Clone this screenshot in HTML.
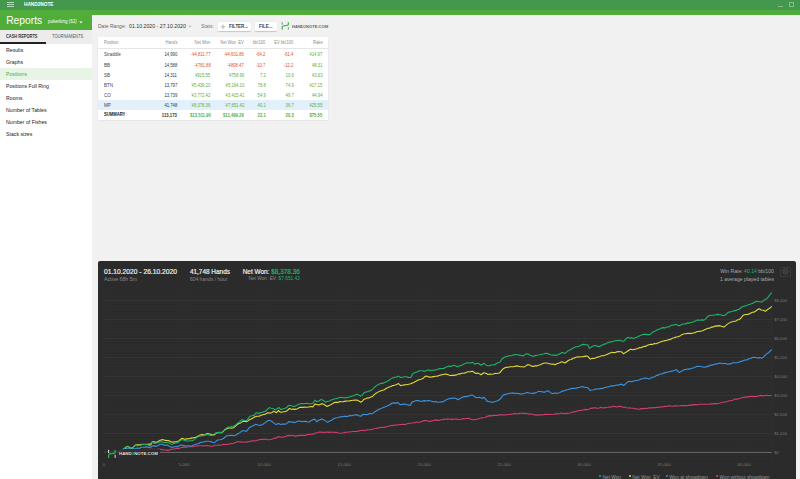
<!DOCTYPE html>
<html><head><meta charset="utf-8">
<style>
*{margin:0;padding:0;box-sizing:border-box}
html,body{width:800px;height:479px;overflow:hidden;background:#f1f1f1;font-family:"Liberation Sans",sans-serif}
.a{position:absolute;white-space:nowrap}
#topbar{left:0;top:0;width:800px;height:9.5px;background:#43984d}
#green{left:0;top:9.5px;width:800px;height:5.7px;background:#51ad39}
#sidegreen{left:0;top:9.5px;width:92px;height:20.5px;background:#51ad39}
#tabs{left:0;top:30px;width:92px;height:13.5px;background:#ececec}
#side{left:0;top:43.5px;width:92px;height:436px;background:#fff}
.mi{position:absolute;left:6px;font-size:5.2px;color:#222;line-height:12px;height:12px}
#card{left:92px;top:15.5px;width:800px;height:470px;background:#f1f1f1;border-radius:2px}
#tbl{left:98px;top:36.8px;width:229.8px;height:83px;background:#fff;box-shadow:0 .5px 1.5px rgba(0,0,0,.12)}
.th{position:absolute;font-size:5px;color:#8c8c8c;line-height:11.7px;transform:scaleX(.82);transform-origin:100% 0}
.td{position:absolute;font-size:5px;color:#333;line-height:10.2px;transform:scaleX(.84);transform-origin:100% 0}
.tl{transform-origin:0 0;transform:scaleX(.87);font-size:5.2px;color:#444}
.r{color:#e0502a}.g{color:#4caf50}
#chart{left:98px;top:261px;width:698.3px;height:230px;background:#2b2b2b;border-radius:2px}
</style></head><body>
<div class="a" id="topbar"></div><div class="a" id="green"></div><div class="a" id="sidegreen"></div><div class="a" id="tabs"></div><div class="a" id="side"></div><div class="a" id="card"></div>
<div class="a" style="left:7px;top:2px;width:6.8px;height:1.1px;background:rgba(255,255,255,.62)"></div>
<div class="a" style="left:7px;top:3.8px;width:6.8px;height:1.1px;background:rgba(255,255,255,.62)"></div>
<div class="a" style="left:7px;top:5.6px;width:6.8px;height:1.1px;background:rgba(255,255,255,.62)"></div>
<div class="a" style="left:24px;top:0px;font-size:5.4px;line-height:8px;font-weight:bold;color:#fff;transform:scaleX(.88);transform-origin:0 0">HAND2NOTE</div>
<div class="a" style="left:778.3px;top:5.8px;width:4.5px;height:.8px;background:rgba(255,255,255,.35)"></div>
<div class="a" style="left:789px;top:2px;width:5px;height:4.8px;border:.8px solid rgba(255,255,255,.35)"></div>
<div class="a" style="left:6.2px;top:13.8px;font-size:10.3px;line-height:14px;color:#fff">Reports</div>
<div class="a" style="left:48px;top:19.1px;font-size:4.5px;line-height:6px;color:#fff">pokerking (62)</div>
<svg class="a" style="left:79px;top:20.5px" width="4" height="3" viewBox="0 0 4 3"><path d="M.3 .4H3.7L2 2.2Z" fill="#fff"/></svg>
<div class="a" style="left:6px;top:33.8px;font-size:4.7px;line-height:6px;font-weight:bold;color:#333;transform:scaleX(.845);transform-origin:0 0">CASH REPORTS</div>
<div class="a" style="left:52.2px;top:33.8px;font-size:4.7px;line-height:6px;color:#555;transform:scaleX(.863);transform-origin:0 0">TOURNAMENTS</div>
<div class="a" style="left:0;top:42.2px;width:46px;height:1.5px;background:#222"></div>
<div class="a" style="left:0;top:68px;width:92px;height:12px;background:#e8f4e6"></div>
<div class="mi" style="top:44px">Results</div>
<div class="mi" style="top:56px">Graphs</div>
<div class="mi" style="top:68px;color:#4caf50">Positions</div>
<div class="mi" style="top:80px">Positions Full Ring</div>
<div class="mi" style="top:92px">Rooms</div>
<div class="mi" style="top:104px">Number of Tables</div>
<div class="mi" style="top:116px">Number of Fishes</div>
<div class="mi" style="top:128px">Stack sizes</div>
<div class="a" style="left:98px;top:23px;font-size:5px;line-height:6px;color:#666">Date Range:</div>
<div class="a" style="left:129px;top:23.2px;font-size:5.23px;line-height:6px;color:#333">01.10.2020 - 27.10.2020</div>
<svg class="a" style="left:188px;top:24.5px" width="4" height="3" viewBox="0 0 4 3"><path d="M.4 .7H3.6L2 2.3Z" fill="#aaa"/></svg>
<div class="a" style="left:201px;top:23px;font-size:5px;line-height:6px;color:#777">Stats:</div>
<div class="a" style="left:217.5px;top:21.9px;width:33.6px;height:9.1px;background:#fff;border-radius:1px;box-shadow:0 .5px 1px rgba(0,0,0,.18)"></div>
<svg class="a" style="left:220px;top:23.5px" width="6" height="6" viewBox="0 0 6 6"><path d="M3 .5V5.2M.6 2.85H5.4" stroke="#888" stroke-width=".55"/></svg>
<div class="a" style="left:228.8px;top:23.4px;font-size:5.4px;line-height:6px;color:#444;font-weight:bold;transform:scaleX(.83);transform-origin:0 0">FILTER...</div>
<div class="a" style="left:254.8px;top:21.9px;width:21.9px;height:9.1px;background:#fff;border-radius:1px;box-shadow:0 .5px 1px rgba(0,0,0,.18)"></div>
<div class="a" style="left:258.7px;top:23.4px;font-size:5.4px;line-height:6px;color:#444;font-weight:bold;transform:scaleX(.83);transform-origin:0 0">FILE...</div>
<svg class="a" style="left:276px;top:18px" width="24" height="16" viewBox="276 18 24 16"><path d="M282.2 22.2V24.7 M288.4 27.3V29.6" stroke="#7a9a7c" stroke-width="1.1" fill="none"/><path d="M282.2 29.5V27.3Q282.2 26.1 283.6 25.9L287 25.4Q288.4 25.2 288.4 24V22.2" stroke="#4cba50" stroke-width="1.35" fill="none"/></svg>
<div class="a" style="left:292px;top:23.6px;font-size:4.1px;line-height:6px;color:#666;font-weight:bold">HAND<span style="color:#4caf50">2</span>NOTE.COM</div>
<div class="a" id="tbl"></div>
<div class="th" style="left:104.3px;top:36.8px;transform-origin:0 0">Position</div>
<div class="th" style="right:622.8px;top:36.8px">Hands</div>
<div class="th" style="right:589.6px;top:36.8px">Net Won</div>
<div class="th" style="right:556.2px;top:36.8px">Net Won&nbsp;&nbsp;EV</div>
<div class="th" style="right:534.3px;top:36.8px">bb/100</div>
<div class="th" style="right:506.3px;top:36.8px">EV bb/100</div>
<div class="th" style="right:477.8px;top:36.8px">Rake</div>
<div class="a" style="left:98px;top:48.2px;width:229.8px;height:.5px;background:#e6e6e6"></div>
<div class="a" style="left:98px;top:99.6px;width:229.8px;height:10.1px;background:#e2f0fc"></div>
<div class="td tl" style="left:104.3px;top:49.3px">Straddle</div>
<div class="td" style="right:622.8px;top:49.3px">14,990</div>
<div class="td r" style="right:589.6px;top:49.3px">-¥4,811.77</div>
<div class="td r" style="right:556.2px;top:49.3px">-¥4,601.86</div>
<div class="td r" style="right:534.3px;top:49.3px">-64.2</div>
<div class="td r" style="right:506.3px;top:49.3px">-61.4</div>
<div class="td g" style="right:477.8px;top:49.3px">¥14.97</div>
<div class="td tl" style="left:104.3px;top:59.5px">BB</div>
<div class="td" style="right:622.8px;top:59.5px">14,588</div>
<div class="td r" style="right:589.6px;top:59.5px">-¥781.88</div>
<div class="td r" style="right:556.2px;top:59.5px">-¥808.47</div>
<div class="td r" style="right:534.3px;top:59.5px">-10.7</div>
<div class="td r" style="right:506.3px;top:59.5px">-12.2</div>
<div class="td g" style="right:477.8px;top:59.5px">¥8.31</div>
<div class="td tl" style="left:104.3px;top:69.7px">SB</div>
<div class="td" style="right:622.8px;top:69.7px">14,311</div>
<div class="td g" style="right:589.6px;top:69.7px">¥915.55</div>
<div class="td g" style="right:556.2px;top:69.7px">¥758.69</div>
<div class="td g" style="right:534.3px;top:69.7px">7.2</div>
<div class="td g" style="right:506.3px;top:69.7px">10.6</div>
<div class="td g" style="right:477.8px;top:69.7px">¥3.63</div>
<div class="td tl" style="left:104.3px;top:79.9px">BTN</div>
<div class="td" style="right:622.8px;top:79.9px">13,797</div>
<div class="td g" style="right:589.6px;top:79.9px">¥5,439.20</div>
<div class="td g" style="right:556.2px;top:79.9px">¥5,164.10</div>
<div class="td g" style="right:534.3px;top:79.9px">78.8</div>
<div class="td g" style="right:506.3px;top:79.9px">74.9</div>
<div class="td g" style="right:477.8px;top:79.9px">¥17.15</div>
<div class="td tl" style="left:104.3px;top:90.1px">CO</div>
<div class="td" style="right:622.8px;top:90.1px">13,739</div>
<div class="td g" style="right:589.6px;top:90.1px">¥3,772.42</div>
<div class="td g" style="right:556.2px;top:90.1px">¥3,415.41</div>
<div class="td g" style="right:534.3px;top:90.1px">54.9</div>
<div class="td g" style="right:506.3px;top:90.1px">49.7</div>
<div class="td g" style="right:477.8px;top:90.1px">¥4.94</div>
<div class="td tl" style="left:104.3px;top:100.3px">MP</div>
<div class="td" style="right:622.8px;top:100.3px">41,748</div>
<div class="td g" style="right:589.6px;top:100.3px">¥8,378.36</div>
<div class="td g" style="right:556.2px;top:100.3px">¥7,651.42</div>
<div class="td g" style="right:534.3px;top:100.3px">40.1</div>
<div class="td g" style="right:506.3px;top:100.3px">36.7</div>
<div class="td g" style="right:477.8px;top:100.3px">¥25.55</div>
<div class="td tl" style="left:104.3px;top:109.5px;font-weight:bold;font-size:4.8px;color:#222;top:109.8px">SUMMARY</div>
<div class="td" style="right:622.8px;top:109.5px;font-weight:bold">113,173</div>
<div class="td g" style="right:589.6px;top:109.5px;font-weight:bold">$13,511.96</div>
<div class="td g" style="right:556.2px;top:109.5px;font-weight:bold">$11,499.29</div>
<div class="td g" style="right:534.3px;top:109.5px;font-weight:bold">22.1</div>
<div class="td g" style="right:506.3px;top:109.5px;font-weight:bold">20.3</div>
<div class="td g" style="right:477.8px;top:109.5px;font-weight:bold">$75.55</div>
<div class="a" id="chart"></div>
<div class="a" style="left:104px;top:267.8px;font-size:6.7px;line-height:8px;-webkit-text-stroke:.22px #e6e6e6;color:#e6e6e6">01.10.2020 - 26.10.2020</div>
<div class="a" style="left:104px;top:276.2px;font-size:5.2px;line-height:6px;color:#8a8a8a">Active 68h 5m</div>
<div class="a" style="left:189.9px;top:267.8px;font-size:6.45px;line-height:8px;-webkit-text-stroke:.22px #e6e6e6;color:#e6e6e6">41,748 Hands</div>
<div class="a" style="left:189.9px;top:276.2px;font-size:5px;line-height:6px;color:#8a8a8a">604 hands / hour</div>
<div class="a" style="left:242.7px;top:267.8px;font-size:6.45px;line-height:8px;-webkit-text-stroke:.22px;color:#e6e6e6">Net Won: <span style="color:#1db367">$8,378.36</span></div>
<div class="a" style="right:500.1px;top:276.2px;font-size:4.8px;line-height:6px;color:#8a8a8a">Net Won&nbsp;&nbsp;EV: <span style="color:#1db367">$7,651.42</span></div>
<div class="a" style="right:26.2px;top:268.4px;font-size:5.1px;line-height:6px;color:#aaa">Win Rate: <span style="color:#1db367">40.14</span> bb/100</div>
<div class="a" style="right:26px;top:276px;font-size:5.1px;line-height:6px;color:#aaa">1 average played tables</div>
<div class="a" style="left:780.2px;top:267.2px;width:10.5px;height:9.6px;border:.5px solid #3a3a3a;border-radius:1px"></div>
<svg class="a" style="left:781.9px;top:268.4px" width="7" height="7" viewBox="0 0 7 7"><path d="M5.57 2.75 L6.33 2.87 L6.33 4.13 L5.57 4.25 L5.49 4.44 L5.95 5.05 L5.05 5.95 L4.44 5.49 L4.25 5.57 L4.13 6.33 L2.87 6.33 L2.75 5.57 L2.56 5.49 L1.95 5.95 L1.05 5.05 L1.51 4.44 L1.43 4.25 L0.67 4.13 L0.67 2.87 L1.43 2.75 L1.51 2.56 L1.05 1.95 L1.95 1.05 L2.56 1.51 L2.75 1.43 L2.87 0.67 L4.13 0.67 L4.25 1.43 L4.44 1.51 L5.05 1.05 L5.95 1.95 L5.49 2.56Z" stroke="#6a6a6a" stroke-width=".45" fill="none"/><circle cx="3.5" cy="3.5" r="1" stroke="#6a6a6a" stroke-width=".45" fill="none"/></svg>
<svg class="a" style="left:0;top:0" width="800" height="479" viewBox="0 0 800 479">
<line x1="104.0" y1="458.73" x2="772.0" y2="458.73" stroke="#323232" stroke-width="0.5"/>
<line x1="104.0" y1="455.57" x2="772.0" y2="455.57" stroke="#323232" stroke-width="0.5"/>
<line x1="104.0" y1="452.40" x2="772.0" y2="452.40" stroke="#8a8a8a" stroke-width="0.7"/>
<line x1="104.0" y1="449.23" x2="772.0" y2="449.23" stroke="#323232" stroke-width="0.5"/>
<line x1="104.0" y1="446.07" x2="772.0" y2="446.07" stroke="#323232" stroke-width="0.5"/>
<line x1="104.0" y1="442.90" x2="772.0" y2="442.90" stroke="#323232" stroke-width="0.5"/>
<line x1="104.0" y1="439.73" x2="772.0" y2="439.73" stroke="#323232" stroke-width="0.5"/>
<line x1="104.0" y1="436.57" x2="772.0" y2="436.57" stroke="#323232" stroke-width="0.5"/>
<line x1="104.0" y1="433.40" x2="772.0" y2="433.40" stroke="#3c3c3c" stroke-width="0.6"/>
<line x1="104.0" y1="430.23" x2="772.0" y2="430.23" stroke="#323232" stroke-width="0.5"/>
<line x1="104.0" y1="427.07" x2="772.0" y2="427.07" stroke="#323232" stroke-width="0.5"/>
<line x1="104.0" y1="423.90" x2="772.0" y2="423.90" stroke="#323232" stroke-width="0.5"/>
<line x1="104.0" y1="420.73" x2="772.0" y2="420.73" stroke="#323232" stroke-width="0.5"/>
<line x1="104.0" y1="417.57" x2="772.0" y2="417.57" stroke="#323232" stroke-width="0.5"/>
<line x1="104.0" y1="414.40" x2="772.0" y2="414.40" stroke="#3c3c3c" stroke-width="0.6"/>
<line x1="104.0" y1="411.23" x2="772.0" y2="411.23" stroke="#323232" stroke-width="0.5"/>
<line x1="104.0" y1="408.07" x2="772.0" y2="408.07" stroke="#323232" stroke-width="0.5"/>
<line x1="104.0" y1="404.90" x2="772.0" y2="404.90" stroke="#323232" stroke-width="0.5"/>
<line x1="104.0" y1="401.73" x2="772.0" y2="401.73" stroke="#323232" stroke-width="0.5"/>
<line x1="104.0" y1="398.57" x2="772.0" y2="398.57" stroke="#323232" stroke-width="0.5"/>
<line x1="104.0" y1="395.40" x2="772.0" y2="395.40" stroke="#3c3c3c" stroke-width="0.6"/>
<line x1="104.0" y1="392.23" x2="772.0" y2="392.23" stroke="#323232" stroke-width="0.5"/>
<line x1="104.0" y1="389.07" x2="772.0" y2="389.07" stroke="#323232" stroke-width="0.5"/>
<line x1="104.0" y1="385.90" x2="772.0" y2="385.90" stroke="#323232" stroke-width="0.5"/>
<line x1="104.0" y1="382.73" x2="772.0" y2="382.73" stroke="#323232" stroke-width="0.5"/>
<line x1="104.0" y1="379.57" x2="772.0" y2="379.57" stroke="#323232" stroke-width="0.5"/>
<line x1="104.0" y1="376.40" x2="772.0" y2="376.40" stroke="#3c3c3c" stroke-width="0.6"/>
<line x1="104.0" y1="373.23" x2="772.0" y2="373.23" stroke="#323232" stroke-width="0.5"/>
<line x1="104.0" y1="370.07" x2="772.0" y2="370.07" stroke="#323232" stroke-width="0.5"/>
<line x1="104.0" y1="366.90" x2="772.0" y2="366.90" stroke="#323232" stroke-width="0.5"/>
<line x1="104.0" y1="363.73" x2="772.0" y2="363.73" stroke="#323232" stroke-width="0.5"/>
<line x1="104.0" y1="360.57" x2="772.0" y2="360.57" stroke="#323232" stroke-width="0.5"/>
<line x1="104.0" y1="357.40" x2="772.0" y2="357.40" stroke="#3c3c3c" stroke-width="0.6"/>
<line x1="104.0" y1="354.23" x2="772.0" y2="354.23" stroke="#323232" stroke-width="0.5"/>
<line x1="104.0" y1="351.07" x2="772.0" y2="351.07" stroke="#323232" stroke-width="0.5"/>
<line x1="104.0" y1="347.90" x2="772.0" y2="347.90" stroke="#323232" stroke-width="0.5"/>
<line x1="104.0" y1="344.73" x2="772.0" y2="344.73" stroke="#323232" stroke-width="0.5"/>
<line x1="104.0" y1="341.57" x2="772.0" y2="341.57" stroke="#323232" stroke-width="0.5"/>
<line x1="104.0" y1="338.40" x2="772.0" y2="338.40" stroke="#3c3c3c" stroke-width="0.6"/>
<line x1="104.0" y1="335.23" x2="772.0" y2="335.23" stroke="#323232" stroke-width="0.5"/>
<line x1="104.0" y1="332.07" x2="772.0" y2="332.07" stroke="#323232" stroke-width="0.5"/>
<line x1="104.0" y1="328.90" x2="772.0" y2="328.90" stroke="#323232" stroke-width="0.5"/>
<line x1="104.0" y1="325.73" x2="772.0" y2="325.73" stroke="#323232" stroke-width="0.5"/>
<line x1="104.0" y1="322.57" x2="772.0" y2="322.57" stroke="#323232" stroke-width="0.5"/>
<line x1="104.0" y1="319.40" x2="772.0" y2="319.40" stroke="#3c3c3c" stroke-width="0.6"/>
<line x1="104.0" y1="316.23" x2="772.0" y2="316.23" stroke="#323232" stroke-width="0.5"/>
<line x1="104.0" y1="313.07" x2="772.0" y2="313.07" stroke="#323232" stroke-width="0.5"/>
<line x1="104.0" y1="309.90" x2="772.0" y2="309.90" stroke="#323232" stroke-width="0.5"/>
<line x1="104.0" y1="306.73" x2="772.0" y2="306.73" stroke="#323232" stroke-width="0.5"/>
<line x1="104.0" y1="303.57" x2="772.0" y2="303.57" stroke="#323232" stroke-width="0.5"/>
<line x1="104.0" y1="300.40" x2="772.0" y2="300.40" stroke="#3c3c3c" stroke-width="0.6"/>
<line x1="104.0" y1="297.23" x2="772.0" y2="297.23" stroke="#323232" stroke-width="0.5"/>
<line x1="104.0" y1="294.07" x2="772.0" y2="294.07" stroke="#323232" stroke-width="0.5"/>
<line x1="104.0" y1="290.90" x2="772.0" y2="290.90" stroke="#323232" stroke-width="0.5"/>
<line x1="104.00" y1="289" x2="104.00" y2="460" stroke="#343434" stroke-width=".5"/>
<line x1="184.00" y1="289" x2="184.00" y2="460" stroke="#343434" stroke-width=".5"/>
<line x1="264.00" y1="289" x2="264.00" y2="460" stroke="#343434" stroke-width=".5"/>
<line x1="344.00" y1="289" x2="344.00" y2="460" stroke="#343434" stroke-width=".5"/>
<line x1="424.00" y1="289" x2="424.00" y2="460" stroke="#343434" stroke-width=".5"/>
<line x1="504.00" y1="289" x2="504.00" y2="460" stroke="#343434" stroke-width=".5"/>
<line x1="584.00" y1="289" x2="584.00" y2="460" stroke="#343434" stroke-width=".5"/>
<line x1="664.00" y1="289" x2="664.00" y2="460" stroke="#343434" stroke-width=".5"/>
<line x1="744.00" y1="289" x2="744.00" y2="460" stroke="#343434" stroke-width=".5"/>
<line x1="772.00" y1="289" x2="772.00" y2="460" stroke="#343434" stroke-width=".5"/>
<text x="774.2" y="453.90" font-size="4.25" fill="#777" font-family="Liberation Sans">$0</text>
<text x="774.2" y="434.90" font-size="4.25" fill="#777" font-family="Liberation Sans">$1,000</text>
<text x="774.2" y="415.90" font-size="4.25" fill="#777" font-family="Liberation Sans">$2,000</text>
<text x="774.2" y="396.90" font-size="4.25" fill="#777" font-family="Liberation Sans">$3,000</text>
<text x="774.2" y="377.90" font-size="4.25" fill="#777" font-family="Liberation Sans">$4,000</text>
<text x="774.2" y="358.90" font-size="4.25" fill="#777" font-family="Liberation Sans">$5,000</text>
<text x="774.2" y="339.90" font-size="4.25" fill="#777" font-family="Liberation Sans">$6,000</text>
<text x="774.2" y="320.90" font-size="4.25" fill="#777" font-family="Liberation Sans">$7,000</text>
<text x="774.2" y="301.90" font-size="4.25" fill="#777" font-family="Liberation Sans">$8,000</text>
<text x="104.00" y="466" font-size="4.35" fill="#777" text-anchor="middle" font-family="Liberation Sans">0</text>
<text x="184.00" y="466" font-size="4.35" fill="#777" text-anchor="middle" font-family="Liberation Sans">5,000</text>
<text x="264.00" y="466" font-size="4.35" fill="#777" text-anchor="middle" font-family="Liberation Sans">10,000</text>
<text x="344.00" y="466" font-size="4.35" fill="#777" text-anchor="middle" font-family="Liberation Sans">15,000</text>
<text x="424.00" y="466" font-size="4.35" fill="#777" text-anchor="middle" font-family="Liberation Sans">20,000</text>
<text x="504.00" y="466" font-size="4.35" fill="#777" text-anchor="middle" font-family="Liberation Sans">25,000</text>
<text x="584.00" y="466" font-size="4.35" fill="#777" text-anchor="middle" font-family="Liberation Sans">30,000</text>
<text x="664.00" y="466" font-size="4.35" fill="#777" text-anchor="middle" font-family="Liberation Sans">35,000</text>
<text x="744.00" y="466" font-size="4.35" fill="#777" text-anchor="middle" font-family="Liberation Sans">40,000</text>
<polyline points="104.0,452.2 105.7,451.9 107.5,451.7 109.2,452.0 110.9,451.4 112.6,451.7 114.4,451.4 116.1,451.0 117.8,451.3 119.5,450.8 121.3,451.0 123.0,451.0 124.7,450.5 126.3,450.5 128.0,450.7 129.6,450.9 131.2,450.2 132.9,450.2 134.6,450.5 136.2,450.7 137.8,450.3 139.5,450.1 141.2,449.9 142.8,450.4 144.5,449.5 146.2,450.2 147.8,449.6 149.5,449.4 151.2,449.3 152.8,449.4 154.5,449.5 156.3,449.7 158.2,449.1 160.0,449.3 161.9,449.6 163.8,450.0 165.6,450.0 167.5,450.4 169.4,450.1 171.2,449.3 173.1,449.0 175.0,449.0 176.9,448.3 178.8,448.4 180.7,447.7 182.6,447.4 184.3,447.1 186.0,447.2 187.6,447.0 189.3,446.7 191.0,446.8 192.7,446.8 194.4,446.5 196.1,445.9 197.8,446.0 199.5,445.7 201.4,445.7 203.2,445.9 205.1,445.8 207.0,445.5 208.9,445.7 210.8,446.2 212.7,446.3 214.5,445.2 216.4,445.2 218.3,445.0 220.1,445.2 222.0,444.8 224.0,444.4 226.0,444.5 228.0,444.4 229.9,443.6 231.8,443.8 233.7,443.2 235.4,442.6 237.2,441.5 238.8,441.7 240.4,442.1 242.0,441.7 243.6,442.2 245.2,442.1 246.9,441.9 248.6,441.6 250.4,441.2 252.1,440.9 254.0,440.9 256.0,440.7 257.9,440.0 260.1,439.6 262.4,439.2 264.1,439.5 265.9,439.1 267.6,439.8 269.3,439.8 271.6,439.2 273.9,438.4 276.2,437.9 278.5,436.6 280.8,437.2 283.1,437.3 285.0,436.5 286.9,435.9 288.8,435.4 290.6,435.7 292.4,435.3 294.2,435.9 296.0,436.1 297.9,435.6 299.9,435.4 301.9,435.2 303.8,435.4 305.6,435.4 307.4,434.5 309.2,434.4 311.0,434.3 312.8,434.1 314.4,433.9 316.1,432.7 317.7,432.6 319.3,432.1 321.2,432.1 323.1,432.4 325.1,432.3 327.0,432.0 328.9,432.4 330.9,432.0 332.9,432.2 334.8,432.4 336.8,432.4 338.7,433.0 340.7,433.3 342.6,433.0 344.5,432.4 346.5,432.2 348.4,432.0 350.3,432.0 352.2,431.5 354.2,431.5 356.2,431.4 358.1,431.1 360.1,430.7 362.0,430.3 364.0,430.6 365.7,430.2 367.4,429.9 369.1,429.7 370.8,429.8 372.5,429.2 374.2,428.7 375.9,428.5 377.6,428.1 379.3,427.9 381.0,427.1 382.7,427.5 384.4,427.1 386.0,426.9 387.7,426.5 389.4,425.8 391.1,425.6 392.8,425.4 394.5,425.0 396.2,425.3 397.9,424.7 399.6,424.5 401.3,424.5 403.0,424.3 404.7,424.5 406.4,424.1 408.1,423.5 409.8,423.2 411.5,423.0 413.2,422.7 414.9,422.7 416.6,422.1 418.3,422.2 420.1,422.1 422.0,421.5 423.9,420.6 425.7,420.5 427.4,420.8 429.1,421.6 430.7,421.1 432.4,420.7 434.0,420.4 435.7,419.9 437.4,420.4 439.1,420.4 440.9,419.7 442.6,419.6 444.3,419.1 446.0,419.3 447.8,418.9 449.5,419.2 451.2,419.1 453.0,419.6 454.8,419.0 456.5,418.9 458.2,419.7 460.0,419.3 461.8,419.1 463.5,418.6 465.2,418.7 467.0,418.5 468.8,418.3 470.5,419.1 472.2,419.8 474.0,419.6 475.9,419.6 477.7,419.0 479.6,418.5 481.5,418.0 483.3,417.7 485.2,417.5 488.0,416.1 489.9,415.6 491.7,415.9 493.6,415.4 495.3,415.3 497.0,415.5 498.6,414.9 500.3,414.8 502.0,414.9 503.6,415.0 505.3,415.0 506.9,414.7 508.5,414.5 510.1,414.4 511.8,414.2 513.4,413.8 515.1,413.5 516.7,413.7 518.4,413.6 520.0,413.2 521.7,413.2 523.4,413.4 525.0,413.3 526.7,413.5 528.4,413.9 530.1,414.3 531.7,414.1 533.4,414.7 535.1,414.9 536.8,415.1 538.4,414.8 540.1,415.1 541.8,414.7 543.4,414.6 545.1,414.4 546.8,414.3 548.4,414.5 550.1,414.3 551.8,414.5 553.4,414.3 555.1,413.9 556.8,413.9 558.4,413.9 560.1,413.5 561.8,413.0 563.4,413.5 565.0,413.6 566.7,413.4 568.4,413.3 570.0,413.0 571.6,412.5 573.3,411.8 575.0,411.9 576.6,411.0 578.2,411.0 579.9,410.3 581.7,410.5 583.4,409.7 585.2,409.4 587.0,409.6 588.7,409.2 590.5,408.4 592.3,408.1 594.0,407.9 595.8,407.9 597.5,408.2 599.2,408.0 600.9,407.3 602.6,407.9 604.3,407.9 606.0,407.5 607.7,407.3 609.4,407.0 611.1,407.1 612.8,406.5 614.5,406.3 616.2,407.0 617.9,406.6 619.6,406.3 621.3,406.6 623.0,407.3 624.7,407.1 626.4,407.8 628.1,408.0 629.8,407.8 631.5,408.3 633.1,408.3 634.8,408.6 636.4,408.7 638.0,409.2 639.7,409.1 641.4,408.6 643.2,408.6 644.9,408.2 646.6,408.7 648.3,408.0 650.1,407.9 651.8,407.9 653.5,407.6 655.1,407.8 656.7,407.3 658.3,407.6 659.9,407.1 661.5,406.9 663.1,406.8 664.7,406.2 666.3,406.5 667.9,406.1 669.5,405.8 671.1,406.1 672.9,406.3 674.6,405.7 676.4,405.9 678.1,406.0 679.9,405.8 681.6,405.5 683.4,405.6 685.1,405.6 686.9,405.7 688.6,405.4 690.4,404.9 692.3,405.1 694.1,404.6 695.9,404.5 697.8,404.7 699.6,404.3 701.7,404.3 703.9,404.3 706.0,404.2 707.6,404.3 709.2,404.3 710.9,403.8 712.5,403.9 714.1,403.6 715.8,403.5 717.4,403.6 719.0,403.3 720.7,402.8 722.4,402.5 724.0,402.0 725.7,402.0 727.4,401.4 729.1,400.8 730.9,400.7 732.7,400.3 734.5,399.3 736.2,399.1 738.0,399.1 739.8,398.5 741.6,397.8 743.4,397.3 745.1,397.1 746.9,397.1 748.6,396.6 750.4,396.6 752.1,396.2 753.9,396.6 755.6,396.5 757.4,396.4 759.1,395.8 760.9,395.4 762.7,395.9 764.5,395.7 766.3,395.2 768.1,395.8 769.9,395.8 771.7,395.3" fill="none" stroke="#d03c6e" stroke-width="1.1" stroke-linejoin="round"/>
<polyline points="104.0,452.2 106.5,451.4 108.2,451.3 110.0,452.0 111.8,451.7 113.5,451.9 115.2,452.4 117.0,452.1 118.9,451.5 120.8,449.9 122.6,449.3 124.5,448.4 126.3,448.5 128.1,448.3 129.9,448.2 131.7,448.4 133.5,448.6 135.5,448.7 137.5,448.0 139.5,448.4 141.0,447.3 142.6,447.3 144.3,447.2 145.9,446.9 147.5,447.1 149.2,447.4 150.8,447.3 153.0,445.6 156.0,446.4 158.0,445.4 160.0,444.3 161.9,444.1 163.8,445.1 165.6,445.1 167.5,445.0 169.8,446.6 172.2,447.4 174.1,446.7 176.0,446.6 177.9,446.5 179.8,445.3 181.6,445.0 184.4,445.7 186.1,446.1 187.7,445.7 189.3,445.7 191.0,446.2 193.3,445.2 195.7,444.3 198.1,443.7 200.4,442.4 202.8,442.2 205.1,441.5 207.0,441.3 208.9,441.2 210.8,441.5 212.7,442.5 214.5,442.7 217.3,440.1 219.7,439.8 222.0,439.3 224.3,437.7 226.7,435.8 228.0,435.8 230.1,435.4 232.2,435.4 234.3,435.8 236.0,435.0 237.8,433.8 239.5,432.9 242.4,430.6 244.4,430.7 246.4,431.5 249.2,427.7 252.1,426.0 253.8,425.5 255.6,424.3 257.9,425.0 260.1,425.4 262.4,424.5 264.7,423.1 267.0,421.3 269.3,420.3 272.2,421.6 274.2,423.4 276.2,424.6 278.5,423.5 280.8,424.6 282.7,423.9 284.7,424.3 286.6,423.7 288.8,421.6 290.7,421.9 292.7,422.1 294.6,422.6 296.0,422.0 298.6,421.1 300.3,421.3 302.0,421.8 303.8,421.3 305.5,421.4 307.2,421.9 308.9,422.0 310.9,420.8 312.8,419.7 314.8,419.1 316.7,421.7 318.4,420.5 320.2,419.6 321.9,419.1 323.8,419.9 325.8,421.1 327.7,422.4 329.6,421.0 331.6,420.2 333.5,418.8 335.2,418.1 337.0,417.8 338.7,417.3 340.5,416.9 342.3,416.8 344.1,416.4 345.9,416.4 347.7,416.5 349.6,415.6 351.6,415.8 353.6,415.2 355.5,414.7 357.2,414.9 359.0,415.7 360.7,416.2 363.3,414.3 366.0,414.5 367.8,414.6 369.7,413.6 371.5,413.7 373.4,412.9 375.2,411.4 377.0,410.4 378.9,409.3 380.5,408.9 382.2,407.9 383.8,407.3 385.5,406.8 387.1,406.0 389.5,405.0 391.8,403.2 393.8,402.9 395.9,403.1 397.9,402.6 400.0,404.6 402.4,404.4 404.7,403.9 406.5,404.6 408.3,404.9 410.1,405.5 412.2,401.9 414.2,401.3 416.3,400.6 418.3,400.5 421.0,401.5 422.7,400.9 424.4,400.6 426.1,401.0 427.8,400.5 429.9,400.8 431.9,401.2 434.0,402.0 435.8,401.6 437.7,402.2 439.5,402.2 441.4,401.9 443.2,401.7 445.3,400.3 447.4,399.3 449.1,398.7 450.9,398.4 452.6,398.2 454.4,397.9 456.1,398.5 457.9,399.7 460.0,398.6 462.1,397.4 464.2,396.5 465.9,396.6 467.6,396.4 469.2,395.7 470.9,395.2 472.6,395.1 475.4,397.2 477.5,397.6 479.6,397.2 482.4,398.6 483.8,397.2 485.6,399.1 487.3,401.4 488.9,401.6 490.6,401.7 492.2,402.5 494.1,401.8 495.9,401.3 497.8,400.7 500.0,399.3 501.6,397.2 503.3,395.1 505.0,394.4 506.7,394.3 508.3,393.5 510.0,393.3 511.7,393.1 513.4,392.9 515.0,393.4 516.7,393.3 518.4,393.5 520.0,393.9 521.7,394.3 523.4,393.5 525.0,393.2 526.7,392.6 528.4,392.8 530.0,393.2 531.7,393.3 533.4,393.4 535.1,392.9 536.7,392.4 538.4,391.4 540.1,391.5 541.7,391.7 543.4,392.1 545.1,392.1 546.7,391.0 548.4,390.9 550.1,392.4 551.8,393.4 553.5,393.5 555.1,393.0 556.8,393.4 558.5,393.0 560.1,392.4 561.8,391.4 563.5,390.9 565.1,390.5 566.8,389.7 568.4,389.6 570.0,388.9 572.0,388.3 573.9,388.4 575.9,388.1 577.9,387.6 579.9,387.3 581.9,386.5 583.9,387.1 585.8,387.5 587.8,387.5 589.8,390.5 591.8,390.0 593.8,389.8 595.8,388.9 597.5,389.0 599.2,388.9 601.0,388.4 602.7,388.5 604.5,387.6 606.2,387.2 608.0,386.9 609.7,386.5 611.4,385.8 613.1,386.1 614.8,385.5 616.5,385.2 618.2,384.9 619.9,384.6 621.6,384.1 623.6,385.5 625.5,383.8 627.5,382.1 629.2,381.3 631.0,381.7 632.8,381.4 634.5,380.8 636.2,380.5 638.0,380.2 639.7,379.8 641.4,378.7 643.1,378.8 644.8,378.0 647.0,378.3 649.2,379.1 651.0,377.9 652.8,377.2 654.7,376.8 656.5,375.4 658.3,375.1 660.1,374.0 661.9,374.0 663.6,373.1 665.4,372.6 667.1,372.2 668.9,371.8 670.8,371.4 672.8,370.9 674.7,370.3 676.6,369.6 678.8,372.5 681.0,371.5 683.1,370.3 684.8,369.6 686.4,369.2 688.0,369.0 689.7,369.1 691.4,368.3 693.0,368.1 694.6,367.4 696.3,366.6 698.2,366.3 700.1,366.5 702.1,366.8 704.0,367.2 705.8,366.9 707.6,366.4 709.4,365.9 711.1,365.1 712.9,364.9 714.7,364.3 716.5,363.9 718.2,363.6 719.8,363.1 721.5,363.2 723.4,363.7 725.3,363.3 727.2,364.2 729.1,363.9 730.9,363.9 732.7,362.8 734.5,362.8 736.2,362.8 738.0,362.5 739.8,361.7 741.6,361.4 743.4,360.6 745.2,359.9 747.0,360.0 748.7,358.7 750.5,358.5 752.3,357.5 754.1,357.2 756.0,357.5 757.9,358.1 759.7,357.6 761.6,358.2 763.3,357.1 765.0,355.3 766.7,353.9 768.4,352.8 770.0,351.2 771.7,349.6" fill="none" stroke="#3b93de" stroke-width="1.1" stroke-linejoin="round"/>
<polyline points="104.0,452.2 106.5,451.4 108.2,451.3 110.0,452.0 111.8,451.7 113.5,451.4 115.2,451.5 117.0,452.1 119.0,451.4 121.0,450.6 123.0,449.9 126.0,447.1 127.9,446.2 130.5,448.2 132.8,447.8 135.0,445.2 137.2,444.9 139.5,444.9 141.8,444.4 144.0,444.5 145.7,444.5 147.4,444.5 149.1,445.1 150.8,444.9 152.3,441.8 154.2,441.7 156.0,442.5 158.0,441.6 160.0,440.3 162.8,439.6 165.2,440.4 167.5,440.5 169.4,440.9 171.3,442.0 173.2,442.1 175.1,441.7 176.9,441.6 178.8,441.0 180.4,439.4 182.1,438.2 184.4,439.3 186.8,438.9 189.1,438.7 191.4,438.1 193.8,437.7 195.7,437.4 197.6,436.2 199.5,435.4 202.3,434.6 205.1,435.2 207.0,433.5 208.9,433.7 210.8,434.2 213.6,435.2 216.4,433.0 218.3,432.8 220.1,432.5 222.0,432.6 224.3,430.3 226.7,428.8 228.0,428.3 229.9,427.7 231.8,428.2 233.7,427.7 236.0,425.5 238.3,423.7 240.6,422.9 242.9,421.4 244.9,421.3 246.9,421.6 248.9,420.1 251.0,419.1 253.0,418.0 255.0,416.8 257.0,416.2 259.0,416.2 261.3,415.2 263.6,414.5 265.6,414.1 267.6,412.8 269.6,413.1 271.6,412.8 273.9,411.1 276.2,412.8 278.5,410.5 280.2,412.2 281.8,412.2 283.4,411.8 285.0,411.7 286.6,411.1 289.4,408.5 291.1,409.2 292.9,409.1 294.6,409.4 296.0,409.1 297.7,408.7 299.5,407.4 301.2,407.2 302.9,407.4 304.5,407.1 306.2,407.3 307.8,407.2 309.5,406.8 311.1,406.5 312.8,406.9 315.1,403.9 317.3,404.8 319.3,404.9 321.2,403.9 323.2,403.9 325.1,405.2 327.0,406.5 328.9,405.5 330.9,404.8 332.9,403.4 334.8,402.3 336.4,402.4 338.1,402.4 339.7,401.6 341.3,401.7 343.4,401.6 345.6,401.1 347.7,401.0 349.5,400.9 351.3,400.5 353.2,400.2 355.0,400.0 356.8,400.1 358.8,400.9 360.7,402.3 362.4,401.1 364.0,399.2 365.7,398.7 367.4,397.9 369.1,398.0 370.8,397.1 372.5,396.4 374.2,394.7 375.9,393.3 377.6,392.4 379.3,391.4 381.0,390.7 382.7,390.2 384.4,389.7 386.0,388.5 387.6,387.8 389.3,387.0 390.9,386.5 392.5,385.6 394.5,385.3 396.6,384.5 398.6,383.6 400.6,385.6 402.4,385.2 404.3,384.9 406.1,384.7 408.5,384.3 410.8,383.8 412.5,382.9 414.2,382.2 415.9,381.3 417.6,380.3 419.3,379.7 421.0,379.2 422.8,378.6 424.6,376.8 426.4,376.1 429.1,377.1 432.0,376.9 433.8,376.6 435.5,376.3 437.2,376.2 439.0,375.5 440.8,374.9 442.5,374.6 444.2,374.2 446.0,374.1 448.1,374.7 450.2,375.5 451.8,375.2 453.5,375.4 455.1,375.1 456.7,374.9 458.4,373.9 460.0,374.1 461.8,373.2 463.5,373.2 465.2,372.9 467.0,372.0 468.9,371.7 470.7,371.6 472.6,371.3 475.4,373.4 478.2,373.1 481.0,374.8 483.8,372.7 485.9,373.2 488.0,374.5 489.8,374.1 491.5,374.3 493.2,374.0 495.0,373.4 496.7,373.5 498.3,373.3 500.0,372.6 501.6,370.4 503.3,368.7 505.0,367.8 506.6,367.4 508.3,367.2 510.0,366.7 511.7,366.7 513.4,366.7 515.0,366.3 516.7,365.9 518.6,366.3 520.5,366.7 522.3,366.7 524.2,367.0 525.9,365.9 527.5,364.7 529.5,364.9 531.4,366.1 533.4,366.4 535.1,365.7 536.8,365.9 538.4,365.3 540.1,364.7 541.8,364.0 543.4,363.2 545.1,363.0 546.8,363.0 548.4,363.6 550.1,363.7 551.8,364.2 553.4,364.0 555.1,364.7 556.8,363.6 558.5,363.2 560.1,362.5 561.8,361.7 563.5,362.2 565.1,363.0 568.0,360.7 569.6,359.8 571.3,359.5 573.0,358.3 574.6,357.9 576.2,357.3 577.9,356.7 579.5,357.0 581.2,356.7 582.8,356.8 584.5,356.4 586.1,356.1 587.8,356.3 590.2,359.1 592.1,358.4 594.0,358.5 595.9,357.8 597.8,357.1 599.8,356.5 601.7,355.8 603.7,355.8 605.3,355.1 606.9,354.6 608.5,353.7 610.1,352.9 611.7,352.4 613.4,352.5 615.0,352.6 616.7,351.9 618.3,351.6 620.0,351.8 621.6,351.8 623.6,353.8 625.6,352.4 627.5,351.3 629.5,349.8 631.1,349.3 632.8,349.7 634.4,349.4 636.0,349.0 637.8,348.4 639.7,347.6 641.5,347.7 643.3,346.5 645.2,346.4 647.0,345.5 648.8,344.8 650.6,344.4 652.5,344.4 654.3,343.6 656.1,343.7 657.9,342.9 659.7,342.3 661.6,341.5 663.4,341.0 665.2,340.6 667.1,340.3 668.9,339.6 670.7,339.4 672.4,338.2 674.2,337.8 675.9,337.1 677.7,336.8 679.9,336.1 682.0,334.6 683.8,334.0 685.7,333.7 687.5,333.4 689.3,333.4 691.2,333.6 693.0,333.0 695.2,332.6 697.4,331.5 699.0,331.4 700.7,331.2 702.4,330.8 704.0,330.1 705.9,329.2 707.8,328.3 709.6,328.2 711.5,327.1 713.4,326.9 715.2,325.9 717.1,326.1 719.0,325.6 720.7,326.0 722.3,326.5 724.0,327.1 725.7,325.6 727.4,324.1 729.1,323.1 730.8,322.1 732.4,321.7 734.1,321.2 735.8,321.2 737.4,319.8 739.1,319.6 741.0,318.0 742.8,315.6 744.4,314.8 746.0,314.5 747.6,314.4 749.3,313.9 750.9,313.0 752.5,312.2 754.1,312.1 755.8,311.0 757.4,309.8 759.1,308.8 761.2,310.0 763.3,310.2 765.4,311.3 767.5,309.5 769.6,308.3 771.7,306.3" fill="none" stroke="#e0d83a" stroke-width="1.1" stroke-linejoin="round"/>
<polyline points="104.0,452.2 106.5,451.4 108.2,451.1 110.0,451.6 111.8,452.0 113.5,452.1 115.2,451.6 117.0,452.1 119.0,450.9 121.0,450.2 123.0,449.9 126.0,447.3 127.9,446.4 130.5,448.4 132.8,448.0 135.0,445.4 137.2,445.7 139.5,445.2 141.8,444.6 144.0,444.4 145.7,444.4 147.4,444.3 149.1,443.6 150.8,443.5 152.3,442.0 154.5,443.5 157.5,442.8 160.0,441.8 161.9,441.7 163.8,442.5 165.6,442.4 167.5,442.4 169.4,443.1 171.3,444.3 173.0,444.1 174.6,443.3 176.2,442.9 177.9,442.7 180.0,440.7 182.1,439.6 184.1,440.3 186.2,440.9 188.2,441.0 190.1,440.8 191.9,440.7 193.8,439.9 195.7,438.2 197.6,437.1 199.5,436.1 201.8,435.7 204.2,435.4 207.0,434.2 208.9,435.0 210.7,435.4 212.6,435.4 214.5,433.9 216.4,432.7 218.3,432.4 220.1,432.4 222.0,432.4 224.3,430.1 226.7,427.9 228.0,427.1 229.9,427.2 231.8,426.2 233.7,426.2 236.0,424.7 238.3,422.6 240.1,421.4 241.8,419.7 244.1,420.4 246.4,420.5 248.1,418.6 249.8,416.2 252.1,415.7 254.4,415.1 256.1,412.8 259.0,413.4 260.7,412.6 262.4,412.2 264.1,411.5 265.9,411.1 267.6,409.2 269.3,407.6 271.1,408.3 272.8,408.5 275.6,409.9 277.4,408.4 279.1,407.6 280.8,409.7 283.1,408.7 285.4,408.2 287.1,407.0 288.8,405.3 291.1,405.7 293.4,406.5 296.0,405.9 298.6,404.3 300.2,403.7 301.9,403.5 303.5,403.7 305.1,403.5 307.0,403.3 309.0,403.8 310.9,403.7 312.8,403.3 315.1,400.1 316.7,401.7 318.9,401.0 321.2,399.4 323.5,400.6 325.8,402.3 327.7,401.3 329.6,401.0 331.3,399.9 333.1,399.5 334.8,398.8 336.5,398.6 338.3,397.9 340.0,397.5 341.7,397.4 343.5,397.7 345.2,397.9 346.8,397.6 348.4,397.2 350.0,396.8 351.6,396.2 353.3,395.8 355.1,395.0 356.8,394.2 358.8,394.9 360.7,396.2 362.4,394.8 364.0,392.8 365.7,392.1 367.4,391.8 369.1,391.0 370.8,390.6 372.5,389.4 374.2,387.5 375.9,386.1 377.6,384.9 379.3,384.1 381.0,383.4 382.7,383.4 384.4,382.5 386.8,381.4 389.1,380.2 390.8,378.9 392.5,377.9 394.5,377.2 396.6,377.1 398.6,376.1 400.6,377.5 402.4,377.3 404.3,376.8 406.1,376.8 408.5,377.4 410.8,377.5 412.8,373.4 414.6,372.8 416.5,372.3 418.3,371.1 421.0,370.7 422.7,370.7 424.4,371.4 426.1,370.7 427.8,370.0 429.9,370.4 432.0,370.3 433.9,370.2 435.7,369.9 437.6,369.2 439.7,368.6 441.8,368.5 443.9,368.5 445.6,367.3 447.4,366.7 449.1,366.1 450.9,366.4 452.6,365.7 454.4,365.3 456.1,366.4 457.9,366.7 459.8,365.7 461.8,365.3 463.7,364.1 465.6,363.3 467.4,362.8 469.1,363.0 470.9,362.9 472.6,362.2 474.7,364.3 476.4,363.4 478.2,363.3 481.0,365.3 483.8,363.3 485.6,364.6 487.3,365.7 489.4,365.6 491.5,365.0 493.6,365.0 495.7,363.9 497.9,362.7 500.0,362.0 502.5,358.4 504.4,357.3 506.4,356.5 508.3,355.9 510.0,355.7 511.7,355.6 513.3,354.9 515.0,354.5 516.7,354.7 518.4,354.8 520.0,355.5 521.7,355.3 523.4,355.9 525.0,354.6 526.7,353.7 528.4,354.1 530.0,355.3 531.7,355.8 533.4,356.4 535.1,355.6 536.8,355.2 538.4,355.0 540.1,354.7 541.8,354.3 543.4,354.0 545.1,353.4 546.8,353.4 548.5,353.9 550.1,354.8 551.8,355.0 553.5,355.1 555.1,355.1 556.8,355.4 558.5,354.3 560.1,353.9 561.8,352.5 563.5,352.8 565.1,353.4 568.0,350.8 570.0,349.9 572.0,348.7 573.9,347.7 575.9,346.8 577.5,346.6 579.1,346.3 580.7,345.2 582.3,344.6 583.9,344.4 585.8,344.8 587.8,344.8 589.4,348.4 591.6,346.8 593.8,345.8 595.8,345.6 597.7,346.6 599.7,346.4 601.7,345.3 603.7,344.4 605.7,343.9 607.7,342.6 609.7,341.9 611.7,341.9 613.7,341.2 615.6,340.5 617.6,340.5 619.6,340.3 621.6,341.1 623.6,341.3 625.5,339.4 627.5,337.3 629.5,338.1 631.5,337.7 633.5,338.5 636.0,337.4 637.6,336.8 639.3,335.9 641.0,335.3 642.6,334.6 644.2,334.3 645.9,334.4 647.6,334.6 649.2,334.6 650.9,333.9 652.7,332.1 654.4,331.4 656.2,330.6 657.9,329.3 659.7,329.3 661.4,328.1 663.2,327.6 664.9,327.9 666.7,327.1 668.5,327.0 670.2,326.0 672.0,325.0 673.7,325.2 675.5,324.3 677.1,324.9 678.8,325.8 680.4,325.4 682.0,324.3 683.8,324.0 685.7,323.9 687.5,322.9 689.3,323.1 691.2,322.2 693.0,322.1 695.2,320.9 697.4,319.9 699.6,320.2 701.8,319.9 704.0,320.1 705.7,318.9 707.3,316.8 709.0,315.6 710.7,315.2 712.3,315.2 714.0,315.1 715.7,314.8 717.3,314.4 719.0,314.6 720.7,314.7 722.3,315.5 724.0,315.6 725.7,314.8 727.4,312.9 729.1,312.1 730.8,311.7 732.4,311.5 734.1,310.4 735.8,310.7 737.4,309.6 739.1,309.5 741.6,307.0 743.3,306.6 744.9,306.0 746.6,305.5 748.3,304.7 749.9,304.3 751.6,303.8 753.3,303.0 754.9,302.1 756.6,301.3 758.3,301.7 759.9,301.7 761.6,302.0 763.3,300.9 765.0,299.4 766.7,298.8 768.4,296.8 770.0,294.6 771.7,292.5" fill="none" stroke="#1db36a" stroke-width="1.1" stroke-linejoin="round"/>
</svg>
<div class="a" style="left:103px;top:449.2px;width:56.8px;height:9.8px;background:rgba(43,43,43,.85)"></div>
<svg class="a" style="left:104px;top:446px" width="16" height="16" viewBox="104 446 16 16"><path d="M108.6 449.8V453 M115.1 454.7V457.9" stroke="#ddd" stroke-width="1" fill="none"/><path d="M108.6 457.9V455.2Q108.6 454 109.9 453.9L113.8 453.3Q115.1 453.1 115.1 451.9V449.9" stroke="#2fb34a" stroke-width="1.3" fill="none"/></svg>
<div class="a" style="left:119px;top:451.2px;font-size:4.4px;line-height:6px;font-weight:bold;color:#ddd">HAND<span style="color:#2fb34a">2</span>NOTE.COM</div>
<div class="a" style="left:599.0px;top:475.4px;width:2px;height:2px;border-radius:50%;background:#1db367"></div>
<div class="a" style="left:602.6px;top:474.6px;font-size:4.75px;line-height:6px;color:#999">Net Won</div>
<div class="a" style="left:628.7px;top:475.4px;width:2px;height:2px;border-radius:50%;background:#e6e03a"></div>
<div class="a" style="left:632.3px;top:474.6px;font-size:4.75px;line-height:6px;color:#999">Net Won&nbsp;&nbsp;EV</div>
<div class="a" style="left:665.6px;top:475.4px;width:2px;height:2px;border-radius:50%;background:#3d8fe0"></div>
<div class="a" style="left:669.2px;top:474.6px;font-size:4.75px;line-height:6px;color:#999">Won at showdown</div>
<div class="a" style="left:716.0px;top:475.4px;width:2px;height:2px;border-radius:50%;background:#e0407a"></div>
<div class="a" style="left:719.6px;top:474.6px;font-size:4.75px;line-height:6px;color:#999">Won without showdown</div>
</body></html>
